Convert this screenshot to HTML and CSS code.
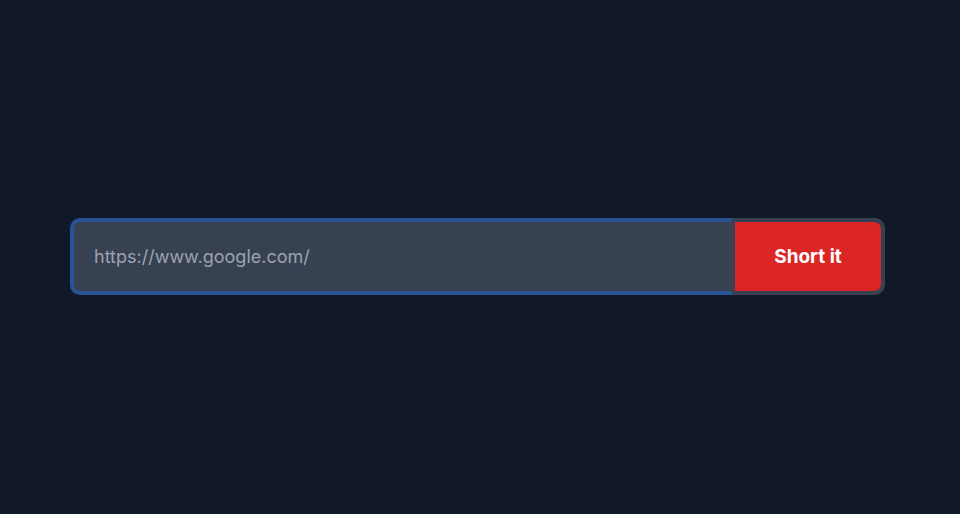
FILE: index.html
```html
<!DOCTYPE html>
<html lang="en">
<head>
<meta charset="utf-8">
<title>Shortener</title>
<link rel="stylesheet" href="styles.css">
</head>
<body>
<main class="page">
  <form class="bar">
    <div class="field"><span class="placeholder">https://www.google.com/</span></div>
    <div class="action"><button type="button" class="btn">Short it</button></div>
  </form>
</main>
</body>
</html>
```
FILE: styles.css
```css
html, body {
  margin: 0;
  padding: 0;
  background: #111827;
  height: 100%;
}
.page {
  height: 514px;
  display: flex;
  align-items: center;
  padding-left: 70px;
  box-sizing: border-box;
  font-family: Inter, "Noto Sans", sans-serif;
}
.bar {
  display: flex;
  width: 815px;
  height: 77px;
  margin: 0;
  margin-top: -1px;
}
.field {
  flex: 1;
  box-sizing: border-box;
  background: #374151;
  border: 4px solid #2a5396;
  border-right: none;
  border-radius: 10px 0 0 10px;
  display: flex;
  align-items: center;
  padding-left: 20px;
}
.placeholder {
  color: #9ca3af;
  font-size: 18px;
}
.action {
  width: 153px;
  box-sizing: border-box;
  border: 4px solid #374151;
  border-left: 3px solid #374151;
  border-radius: 0 10px 10px 0;
  background: #374151;
  display: flex;
}
.btn {
  flex: 1;
  border: none;
  margin: 0;
  background: #dc2626;
  color: #ffffff;
  font-family: Inter, "Noto Sans", sans-serif;
  font-weight: 700;
  font-size: 19px;
  border-radius: 0 7px 7px 0;
  padding: 0;
}
```
